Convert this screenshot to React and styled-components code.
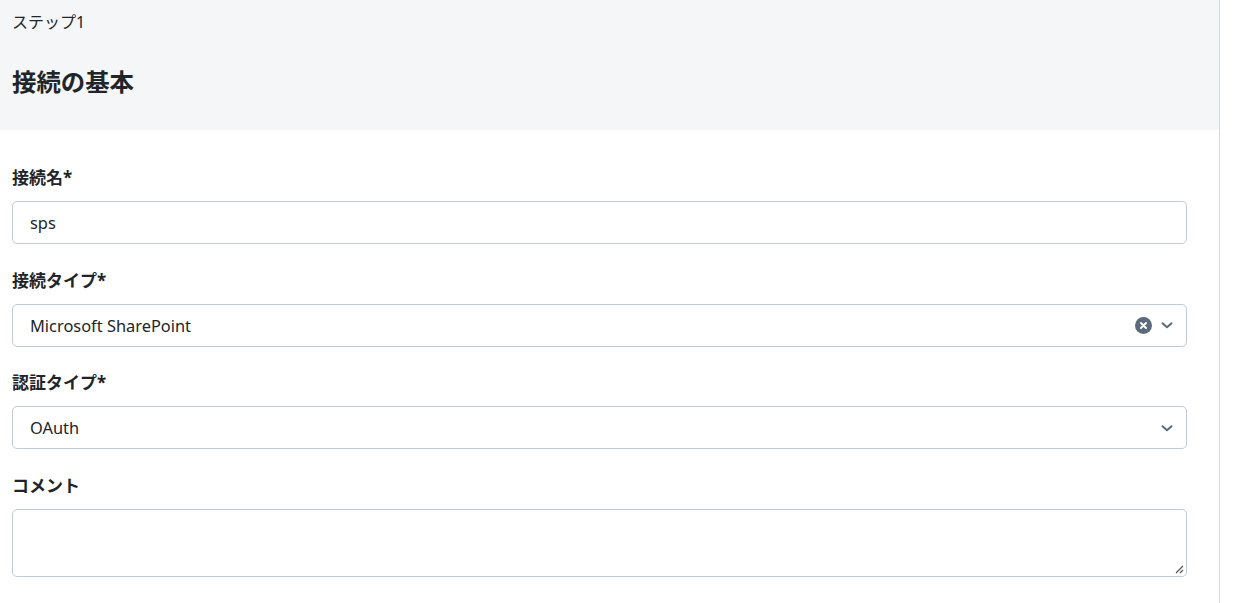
import React from "react";
import styled, { createGlobalStyle } from "styled-components";

const Global = createGlobalStyle`
  html, body { margin: 0; padding: 0; background: #fff; }
  body { font-family: "Noto Sans", "Noto Sans CJK JP", sans-serif; color: #212529; }
  * { box-sizing: border-box; }
`;

const Page = styled.div`
  display: flex;
  height: 603px;
`;

const Panel = styled.div`
  width: 1220px;
  border-right: 1px solid #d4dae1;
  display: flex;
  flex-direction: column;
`;

const Header = styled.div`
  background: #f5f6f8;
  height: 130px;
  padding: 10px 12px 0;
`;

const Step = styled.div`
  font-size: 16px;
  line-height: 24px;
`;

const Title = styled.h2`
  margin: 32px 0 0;
  font-size: 24.4px;
  font-weight: 700;
  line-height: 32px;
`;

const Form = styled.div`
  padding: 36px 32px 0 12px;
  display: flex;
  flex-direction: column;
`;

const Field = styled.div`
  display: flex;
  flex-direction: column;
  margin-bottom: 24.6px;
`;

const Label = styled.label`
  font-size: 17px;
  font-weight: 700;
  line-height: 24px;
  margin-bottom: 11px;
`;

const Box = styled.div`
  height: ${(p) => p.$h || 43}px;
  border: 1px solid #bfcbd8;
  border-radius: 5px;
  background: #fff;
  display: flex;
  align-items: center;
  padding: 0 12px 0 17px;
  font-size: 16.4px;
  color: #212529;
  position: relative;
`;

const Value = styled.span`
  flex: 1;
`;

const Icons = styled.div`
  display: flex;
  align-items: center;
  gap: 8px;
`;

const Grip = styled.svg`
  position: absolute;
  right: 2px;
  bottom: 2px;
`;

const Clear = () => (
  <svg width="17" height="17" viewBox="0 0 16 16">
    <circle cx="8" cy="8" r="8" fill="#5c6b7c" />
    <path d="M5.6 5.6 L10.4 10.4 M10.4 5.6 L5.6 10.4" stroke="#fff" strokeWidth="1.8" strokeLinecap="round" />
  </svg>
);

const Chevron = () => (
  <svg width="14" height="14" viewBox="0 0 14 14">
    <path d="M2.5 5.2 L7 9.2 L11.5 5.2" fill="none" stroke="#5c6b7c" strokeWidth="2" strokeLinecap="round" strokeLinejoin="round" />
  </svg>
);

export default function App() {
  return (
    <>
      <Global />
      <Page>
        <Panel>
          <Header>
            <Step>ステップ1</Step>
            <Title>接続の基本</Title>
          </Header>
          <Form>
            <Field>
              <Label>接続名*</Label>
              <Box><Value>sps</Value></Box>
            </Field>
            <Field>
              <Label>接続タイプ*</Label>
              <Box>
                <Value>Microsoft SharePoint</Value>
                <Icons><Clear /><Chevron /></Icons>
              </Box>
            </Field>
            <Field>
              <Label>認証タイプ*</Label>
              <Box>
                <Value>OAuth</Value>
                <Icons><Chevron /></Icons>
              </Box>
            </Field>
            <Field>
              <Label>コメント</Label>
              <Box $h={68}>
                <Grip width="10" height="10" viewBox="0 0 10 10">
                  <path d="M9 2 L2 9 M9 6 L6 9" stroke="#555" strokeWidth="1.2" />
                </Grip>
              </Box>
            </Field>
          </Form>
        </Panel>
      </Page>
    </>
  );
}
